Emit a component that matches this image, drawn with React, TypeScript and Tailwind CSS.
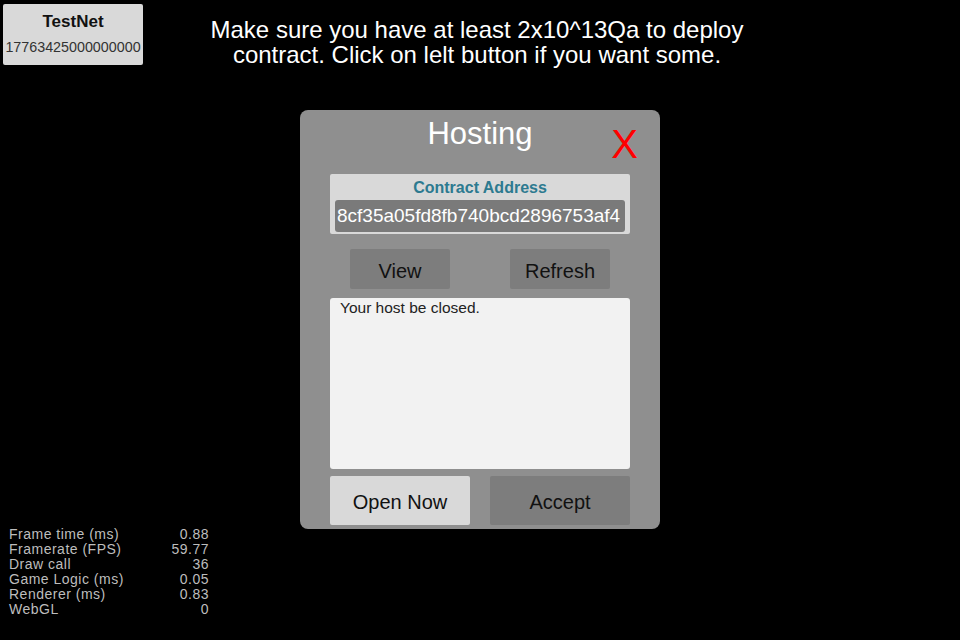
import React from "react";

// Stats overlay rows
const stats: [string, string][] = [
  ["Frame time (ms)", "0.88"],
  ["Framerate (FPS)", "59.77"],
  ["Draw call", "36"],
  ["Game Logic (ms)", "0.05"],
  ["Renderer (ms)", "0.83"],
  ["WebGL", "0"],
];

export default function App() {
  return (
    <div
      className="relative w-[960px] h-[640px] bg-black overflow-hidden"
      style={{ fontFamily: '"Liberation Sans", Arial, sans-serif' }}
    >
      {/* Top bar */}
      <div className="flex items-start">
        <div className="ml-[3px] mt-[4px] w-[140px] h-[61px] bg-[#d9d9d9] rounded-[2px] flex flex-col items-center">
          <div className="mt-[8px] text-[17px] leading-[20px] font-bold text-[#111]">TestNet</div>
          <div className="mt-[7px] text-[14.3px] leading-[16px] text-[#333] whitespace-nowrap">17763425000000000</div>
        </div>
        <div className="ml-[54px] mt-[17px] w-[560px] text-center text-white text-[24px] leading-[25px]">
          Make sure you have at least 2x10^13Qa to deploy
          <br />
          contract. Click on lelt button if you want some.
        </div>
      </div>

      {/* Hosting dialog */}
      <div className="absolute left-[300px] top-[110px] w-[360px] h-[419px] bg-[#8f8f8f] rounded-[8px] flex flex-col px-[30px]">
        <div className="relative h-[64px]">
          <div className="pt-[6px] text-center text-white text-[31px] leading-[36px]">Hosting</div>
          <button className="absolute right-[-8px] top-[14px] text-[#ff0000] text-[40px] leading-[40px]">X</button>
        </div>

        <div className="h-[60px] bg-[#d9d9d9] rounded-[2px] flex flex-col items-center px-[5px]">
          <div className="mt-[5px] text-[16px] leading-[18px] font-bold text-[#2d7a90]">Contract Address</div>
          <div className="mt-[3px] w-full h-[32px] bg-[#7a7a7a] rounded-[3px] overflow-hidden whitespace-nowrap text-white text-[19px] leading-[32px] pl-[2px]">
            8cf35a05fd8fb740bcd2896753af4
          </div>
        </div>

        <div className="mt-[15px] flex justify-between px-[20px]">
          <button className="w-[100px] h-[40px] pt-[4px] bg-[#7d7d7d] rounded-[2px] text-[20px] text-[#111]">View</button>
          <button className="w-[100px] h-[40px] pt-[4px] bg-[#7d7d7d] rounded-[2px] text-[20px] text-[#111]">Refresh</button>
        </div>

        <div className="mt-[9px] h-[171px] bg-[#f2f2f2] rounded-[3px] px-[10px] py-[1px] text-[15.5px] leading-[18px] text-[#222]">
          Your host be closed.
        </div>

        <div className="mt-[7px] flex justify-between">
          <button className="w-[140px] h-[49px] pt-[2px] bg-[#d9d9d9] rounded-[2px] text-[20px] text-[#111]">Open Now</button>
          <button className="w-[140px] h-[49px] pt-[2px] bg-[#7d7d7d] rounded-[2px] text-[20px] text-[#111]">Accept</button>
        </div>
      </div>

      {/* Stats */}
      <div className="absolute left-[9px] top-[527px] w-[200px] text-[#bdbdbd] text-[14px] leading-[15px] tracking-[0.5px]">
        {stats.map(([k, v]) => (
          <div key={k} className="flex justify-between">
            <span>{k}</span>
            <span>{v}</span>
          </div>
        ))}
      </div>
    </div>
  );
}
